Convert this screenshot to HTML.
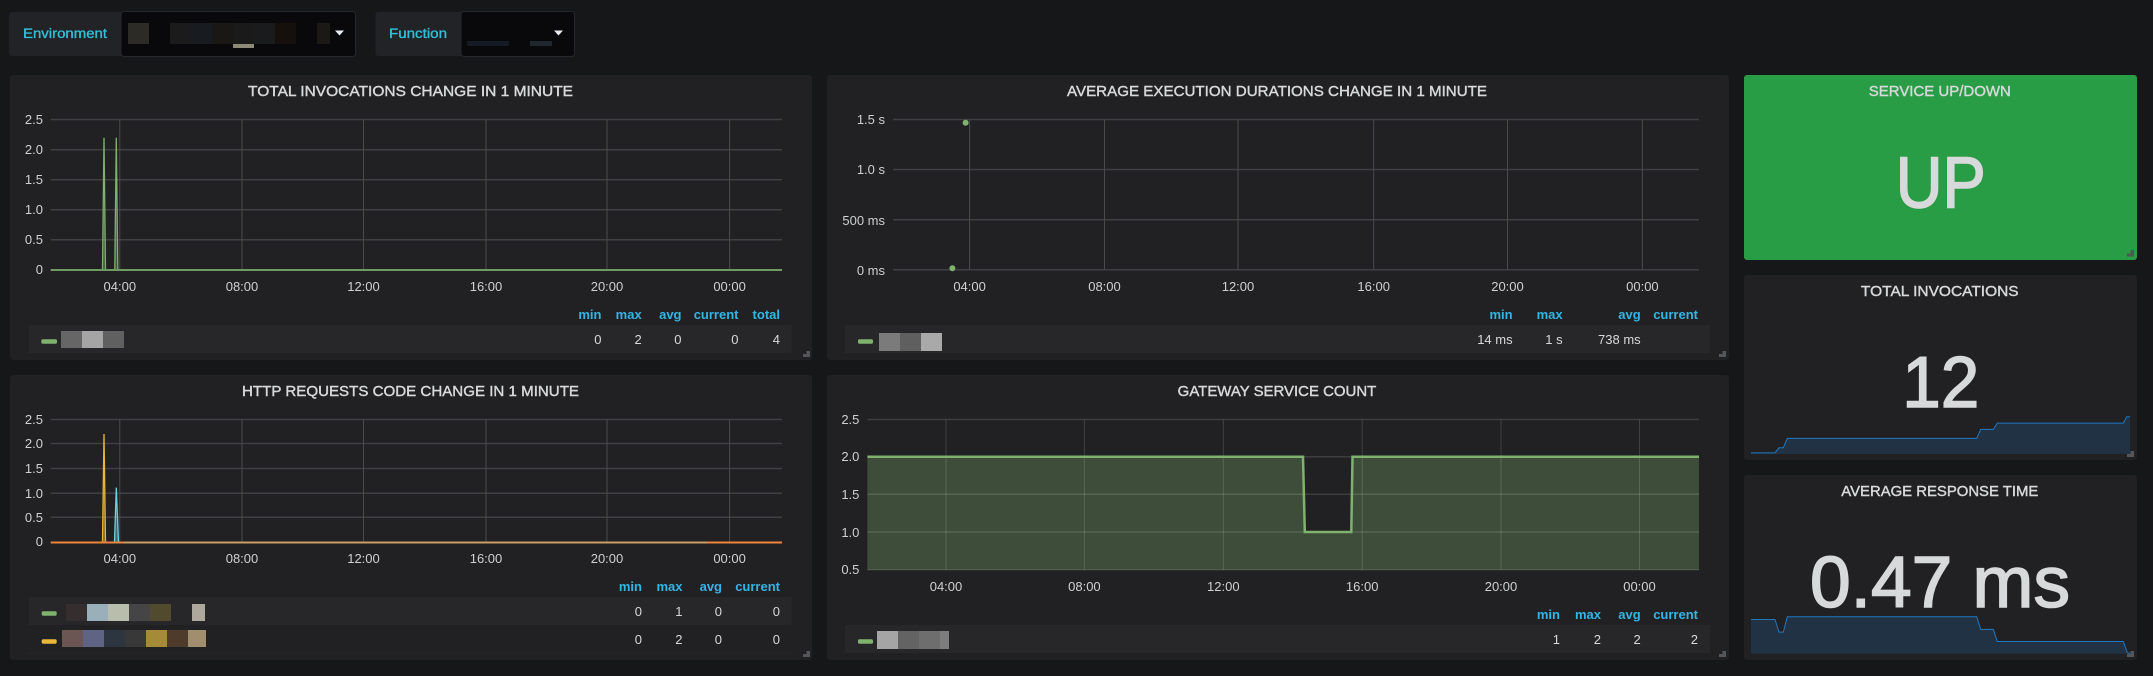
<!DOCTYPE html>
<html><head><meta charset="utf-8"><style>
html,body{margin:0;padding:0;background:#161719;width:2153px;height:676px;overflow:hidden}
svg{display:block;font-family:"Liberation Sans",sans-serif}
.t{font-size:14.5px;fill:#d8d9da;stroke:#d8d9da;stroke-width:.4;text-anchor:middle}
.y{font-size:13px;fill:#cfd0d1;text-anchor:end}
.x{font-size:13px;fill:#cfd0d1;text-anchor:middle}
.h{font-size:13px;font-weight:bold;fill:#33b5e5;text-anchor:end}
.v{font-size:13px;fill:#d8d9da;text-anchor:end}
.g{stroke:#404043;stroke-width:1.5;fill:none}
.gv{stroke:#4a4a4d;stroke-width:1;fill:none}
.g2{stroke:rgba(255,255,255,.13);stroke-width:1.5;fill:none}
.gv2{stroke:rgba(255,255,255,.14);stroke-width:1;fill:none}
.big{font-size:72px;fill:#d8d9da;stroke:#d8d9da;stroke-width:1.6;text-anchor:middle}
.l{font-size:13.5px;fill:#33bfd6;stroke:#33bfd6;stroke-width:.35}
</style></head><body>
<svg width="2153" height="676" viewBox="0 0 2153 676" xmlns="http://www.w3.org/2000/svg">
<rect width="2153" height="676" fill="#161719"/>

<!-- top bar -->
<rect x="9" y="12" width="120" height="44" rx="3" fill="#212327"/>
<rect x="121" y="11.5" width="234.5" height="45" rx="3" fill="#09090b" stroke="#25272b"/>
<text class="l" x="23" y="38" textLength="84" lengthAdjust="spacingAndGlyphs">Environment</text>
<rect x="128" y="23" width="21" height="21" fill="#2c2b25"/>
<rect x="170" y="23" width="21" height="21" fill="#1b1b1b"/>
<rect x="191" y="23" width="21" height="21" fill="#181c20"/>
<rect x="212" y="23" width="21" height="21" fill="#1a1815"/>
<rect x="233" y="23" width="21" height="21" fill="#1a1a1a"/>
<rect x="254" y="23" width="21" height="21" fill="#1a1b1d"/>
<rect x="275" y="23" width="21" height="21" fill="#16100d"/>
<rect x="317" y="23" width="13" height="21" fill="#1a1915"/>
<rect x="233" y="44" width="21" height="4" fill="#8d8a78"/>
<path d="M335 30.500h9l-4.500 5z" fill="#e9edf2"/>

<rect x="375.500" y="12" width="95" height="44" rx="3" fill="#212327"/>
<rect x="461" y="11.5" width="113.500" height="45" rx="3" fill="#09090b" stroke="#25272b"/>
<text class="l" x="389" y="38" textLength="58" lengthAdjust="spacingAndGlyphs">Function</text>
<rect x="467" y="41" width="42" height="5" fill="#141b26"/>
<rect x="530" y="41" width="22" height="5" fill="#20272c"/>
<path d="M554 30.500h9l-4.500 5z" fill="#e9edf2"/>

<!-- panel 1 -->
<rect x="10" y="75" width="802" height="285" rx="3" fill="#212124"/>
<text class="t" x="410.500" y="96" textLength="325" lengthAdjust="spacingAndGlyphs">TOTAL INVOCATIONS CHANGE IN 1 MINUTE</text>
<path class="g" d="M50.700 119.500H782M50.700 149.700H782M50.700 179.700H782M50.700 209.700H782M50.700 239.700H782"/>
<path class="gv" d="M119.800 119.500V270M242 119.500V270M363.500 119.500V270M486 119.500V270M607 119.500V270M729.600 119.500V270"/>
<text class="y" x="43" y="124">2.5</text><text class="y" x="43" y="154">2.0</text><text class="y" x="43" y="184">1.5</text><text class="y" x="43" y="214">1.0</text><text class="y" x="43" y="244">0.5</text><text class="y" x="43" y="274">0</text>
<text class="x" x="119.800" y="291">04:00</text><text class="x" x="242" y="291">08:00</text><text class="x" x="363.500" y="291">12:00</text><text class="x" x="486" y="291">16:00</text><text class="x" x="607" y="291">20:00</text><text class="x" x="729.600" y="291">00:00</text>
<path d="M102.500 270L104 137.700L105.500 270z" fill="#7eb26d" fill-opacity=".35"/>
<path d="M114.800 270L116.300 137.700L117.800 270z" fill="#7eb26d" fill-opacity=".35"/>
<path d="M50.700 270H102.500L104 137.700L105.500 270H114.800L116.300 137.700L117.800 270H782" fill="none" stroke="#7eb26d" stroke-width="1.300"/>
<path d="M50.700 270H782" stroke="#6f9a62" stroke-width="2"/>
<text class="h" x="601.500" y="319">min</text><text class="h" x="641.700" y="319">max</text><text class="h" x="681.500" y="319">avg</text><text class="h" x="738.500" y="319">current</text><text class="h" x="780" y="319">total</text>
<rect x="29" y="325" width="762.500" height="28" fill="#27272a"/>
<rect x="41.300" y="339.300" width="15.700" height="4.400" rx="1.500" fill="#7eb26d"/>
<rect x="61" y="331" width="21" height="17" fill="#666"/><rect x="82" y="331" width="21" height="17" fill="#a5a5a5"/><rect x="103" y="331" width="21" height="17" fill="#606060"/>
<text class="v" x="601.500" y="344">0</text><text class="v" x="641.700" y="344">2</text><text class="v" x="681.500" y="344">0</text><text class="v" x="738.500" y="344">0</text><text class="v" x="780" y="344">4</text>
<path d="M810 351v6h-7v-3h3.500v-3z" fill="#55565a"/>

<!-- panel 2 -->
<rect x="10" y="375" width="802" height="285" rx="3" fill="#212124"/>
<text class="t" x="410.500" y="396" textLength="337" lengthAdjust="spacingAndGlyphs">HTTP REQUESTS CODE CHANGE IN 1 MINUTE</text>
<path class="g" d="M50.700 419.500H782M50.700 443.500H782M50.700 468.500H782M50.700 493.300H782M50.700 517.200H782"/>
<path class="gv" d="M119.800 419.500V542M242 419.500V542M363.500 419.500V542M486 419.500V542M607 419.500V542M729.600 419.500V542"/>
<text class="y" x="43" y="424">2.5</text><text class="y" x="43" y="448">2.0</text><text class="y" x="43" y="473">1.5</text><text class="y" x="43" y="498">1.0</text><text class="y" x="43" y="522">0.5</text><text class="y" x="43" y="546">0</text>
<text class="x" x="119.800" y="563">04:00</text><text class="x" x="242" y="563">08:00</text><text class="x" x="363.500" y="563">12:00</text><text class="x" x="486" y="563">16:00</text><text class="x" x="607" y="563">20:00</text><text class="x" x="729.600" y="563">00:00</text>
<path d="M102.500 542L104 434L105.500 542z" fill="#eab839" fill-opacity=".4"/>
<path d="M102.500 542L104 434L105.500 542" fill="none" stroke="#eab839" stroke-width="1.300"/>
<path d="M114.500 542L116.300 487.700L118.500 542z" fill="#6ed0e0" fill-opacity=".4"/>
<path d="M114.500 542L116.300 487.700L118.500 542" fill="none" stroke="#6ed0e0" stroke-width="1.300"/>
<path d="M50.700 542.500H124" stroke="#ef843c" stroke-width="2"/>
<path d="M124 542.500H707" stroke="#c9a064" stroke-width="2"/>
<path d="M707 542.500H782" stroke="#ef843c" stroke-width="2"/>
<text class="h" x="642" y="591">min</text><text class="h" x="682.500" y="591">max</text><text class="h" x="722" y="591">avg</text><text class="h" x="780" y="591">current</text>
<rect x="29" y="597" width="762.500" height="28" fill="#27272a"/>
<path d="M29 653H791.500" stroke="#27272a"/>
<rect x="41.700" y="611.300" width="15" height="4.400" rx="1.500" fill="#7eb26d"/>
<rect x="66" y="604" width="21" height="17" fill="#342f2e"/><rect x="87" y="604" width="21" height="17" fill="#99b0ba"/><rect x="108" y="604" width="21" height="17" fill="#b9bdab"/><rect x="129" y="604" width="21" height="17" fill="#454545"/><rect x="150" y="604" width="21" height="17" fill="#524a2e"/><rect x="192" y="604" width="13" height="17" fill="#aca89c"/>
<rect x="41.700" y="639.300" width="15" height="4.400" rx="1.500" fill="#eab839"/>
<rect x="62" y="630" width="21" height="17" fill="#6c5654"/><rect x="83" y="630" width="21" height="17" fill="#5f6484"/><rect x="104" y="630" width="21" height="17" fill="#2d3540"/><rect x="125" y="630" width="21" height="17" fill="#383838"/><rect x="146" y="630" width="21" height="17" fill="#a58a38"/><rect x="167" y="630" width="21" height="17" fill="#4f3b2b"/><rect x="188" y="630" width="18" height="17" fill="#a08e6e"/>
<text class="v" x="642" y="616">0</text><text class="v" x="682.500" y="616">1</text><text class="v" x="722" y="616">0</text><text class="v" x="780" y="616">0</text>
<text class="v" x="642" y="644">0</text><text class="v" x="682.500" y="644">2</text><text class="v" x="722" y="644">0</text><text class="v" x="780" y="644">0</text>
<path d="M810 651v6h-7v-3h3.500v-3z" fill="#55565a"/>

<!-- panel 3 -->
<rect x="827" y="75" width="902" height="285" rx="3" fill="#212124"/>
<text class="t" x="1277" y="96" textLength="420" lengthAdjust="spacingAndGlyphs">AVERAGE EXECUTION DURATIONS CHANGE IN 1 MINUTE</text>
<path class="g" d="M893.200 119.500H1699M893.200 169.500H1699M893.200 219.700H1699M893.200 269.700H1699"/>
<path class="gv" d="M969.600 119.500V270M1104.500 119.500V270M1238 119.500V270M1373.700 119.500V270M1507.500 119.500V270M1642.400 119.500V270"/>
<text class="y" x="885" y="124">1.5 s</text><text class="y" x="885" y="174">1.0 s</text><text class="y" x="885" y="225">500 ms</text><text class="y" x="885" y="275">0 ms</text>
<text class="x" x="969.600" y="291">04:00</text><text class="x" x="1104.500" y="291">08:00</text><text class="x" x="1238" y="291">12:00</text><text class="x" x="1373.700" y="291">16:00</text><text class="x" x="1507.500" y="291">20:00</text><text class="x" x="1642.400" y="291">00:00</text>
<circle cx="965.600" cy="122.700" r="3" fill="#7eb26d"/><circle cx="952.400" cy="268.300" r="3" fill="#7eb26d"/>
<text class="h" x="1512.600" y="319">min</text><text class="h" x="1562.600" y="319">max</text><text class="h" x="1640.700" y="319">avg</text><text class="h" x="1698" y="319">current</text>
<rect x="845" y="325" width="865" height="28" fill="#27272a"/>
<rect x="858" y="339.300" width="15" height="4.400" rx="1.500" fill="#7eb26d"/>
<rect x="879" y="333" width="21" height="18" fill="#7b7b7b"/><rect x="900" y="333" width="21" height="18" fill="#5f5f5f"/><rect x="921" y="333" width="21" height="18" fill="#a9a9a9"/>
<text class="v" x="1512.600" y="344">14 ms</text><text class="v" x="1562.600" y="344">1 s</text><text class="v" x="1640.700" y="344">738 ms</text>
<path d="M1726 351v6h-7v-3h3.500v-3z" fill="#55565a"/>

<!-- panel 4 -->
<rect x="827" y="375" width="902" height="285" rx="3" fill="#212124"/>
<text class="t" x="1277" y="396" textLength="198.600" lengthAdjust="spacingAndGlyphs">GATEWAY SERVICE COUNT</text>
<path d="M867.400 456.700H1303L1304.800 532H1351.300L1352.500 456.700H1699V569.700H867.400z" fill="#7eb26d" fill-opacity=".3"/>
<path class="g2" d="M867.400 419.500H1699M867.400 456.700H1699M867.400 494.300H1699M867.400 532H1699M867.400 569.700H1699"/>
<path class="gv2" d="M946 419.500V570M1084.400 419.500V570M1223.300 419.500V570M1362.200 419.500V570M1501 419.500V570M1639.500 419.500V570"/>
<path d="M867.400 456.700H1303L1304.800 532H1351.300L1352.500 456.700H1699" fill="none" stroke="#7eb26d" stroke-width="2.500"/>
<text class="y" x="859.400" y="424">2.5</text><text class="y" x="859.400" y="461">2.0</text><text class="y" x="859.400" y="499">1.5</text><text class="y" x="859.400" y="537">1.0</text><text class="y" x="859.400" y="574">0.5</text>
<text class="x" x="946" y="591">04:00</text><text class="x" x="1084.400" y="591">08:00</text><text class="x" x="1223.300" y="591">12:00</text><text class="x" x="1362.200" y="591">16:00</text><text class="x" x="1501" y="591">20:00</text><text class="x" x="1639.500" y="591">00:00</text>
<text class="h" x="1560" y="619">min</text><text class="h" x="1601" y="619">max</text><text class="h" x="1640.700" y="619">avg</text><text class="h" x="1698" y="619">current</text>
<rect x="845" y="625" width="865" height="28" fill="#27272a"/>
<rect x="858" y="639.300" width="15" height="4.400" rx="1.500" fill="#7eb26d"/>
<rect x="877" y="631" width="21" height="18" fill="#a5a5a5"/><rect x="898" y="631" width="21" height="18" fill="#636363"/><rect x="919" y="631" width="21" height="18" fill="#6e6e6e"/><rect x="940" y="631" width="9" height="18" fill="#7d7d7d"/>
<text class="v" x="1560" y="644">1</text><text class="v" x="1601" y="644">2</text><text class="v" x="1640.700" y="644">2</text><text class="v" x="1698" y="644">2</text>
<path d="M1726 651v6h-7v-3h3.500v-3z" fill="#55565a"/>

<!-- right: service up/down -->
<rect x="1744" y="75" width="393" height="185" rx="3" fill="#299c46"/>
<text class="t" x="1939.800" y="96" textLength="142" lengthAdjust="spacingAndGlyphs">SERVICE UP/DOWN</text>
<text class="big" x="1940.700" y="207.300" textLength="90" lengthAdjust="spacingAndGlyphs">UP</text>
<path d="M2134 250v6.500h-7v-3h3.500v-3.500z" fill="#4b5a50"/>

<!-- right: total invocations -->
<rect x="1744" y="275" width="393" height="185" rx="3" fill="#212124"/>
<text class="t" x="1939.800" y="296" textLength="157.700" lengthAdjust="spacingAndGlyphs">TOTAL INVOCATIONS</text>
<text class="big" x="1940.800" y="407" textLength="77" lengthAdjust="spacingAndGlyphs">12</text>
<path d="M1751 452.900H1775L1779 447.800H1783.300L1787.300 438.400H1976.700L1980.700 429.400H1993.300L1997.300 423.100H2123.300L2126.700 416.800H2130V454H1751z" fill="#1f78c1" fill-opacity=".2"/>
<path d="M1751 452.900H1775L1779 447.800H1783.300L1787.300 438.400H1976.700L1980.700 429.400H1993.300L1997.300 423.100H2123.300L2126.700 416.800H2130" fill="none" stroke="#1f78c1" stroke-width="1"/>
<path d="M2134 451v6h-7v-3h3.500v-3z" fill="#55565a"/>

<!-- right: average response time -->
<rect x="1744" y="475" width="393" height="185" rx="3" fill="#212124"/>
<text class="t" x="1939.800" y="496" textLength="197" lengthAdjust="spacingAndGlyphs">AVERAGE RESPONSE TIME</text>
<text class="big" x="1940" y="607" textLength="260" lengthAdjust="spacingAndGlyphs">0.47 ms</text>
<path d="M1751 619.500H1775L1779 632.100H1783.300L1787.300 616.800H1976.700L1980.700 629.400H1993.300L1997.300 641.500H2123.300L2127.300 652.500L2130 653.700H1751z" fill="#1f78c1" fill-opacity=".2"/>
<path d="M1751 619.500H1775L1779 632.100H1783.300L1787.300 616.800H1976.700L1980.700 629.400H1993.300L1997.300 641.500H2123.300L2127.300 652.500L2130 653.700" fill="none" stroke="#1f78c1" stroke-width="1"/>
<path d="M2134 651v6h-7v-3h3.500v-3z" fill="#55565a"/>
</svg>
</body></html>
